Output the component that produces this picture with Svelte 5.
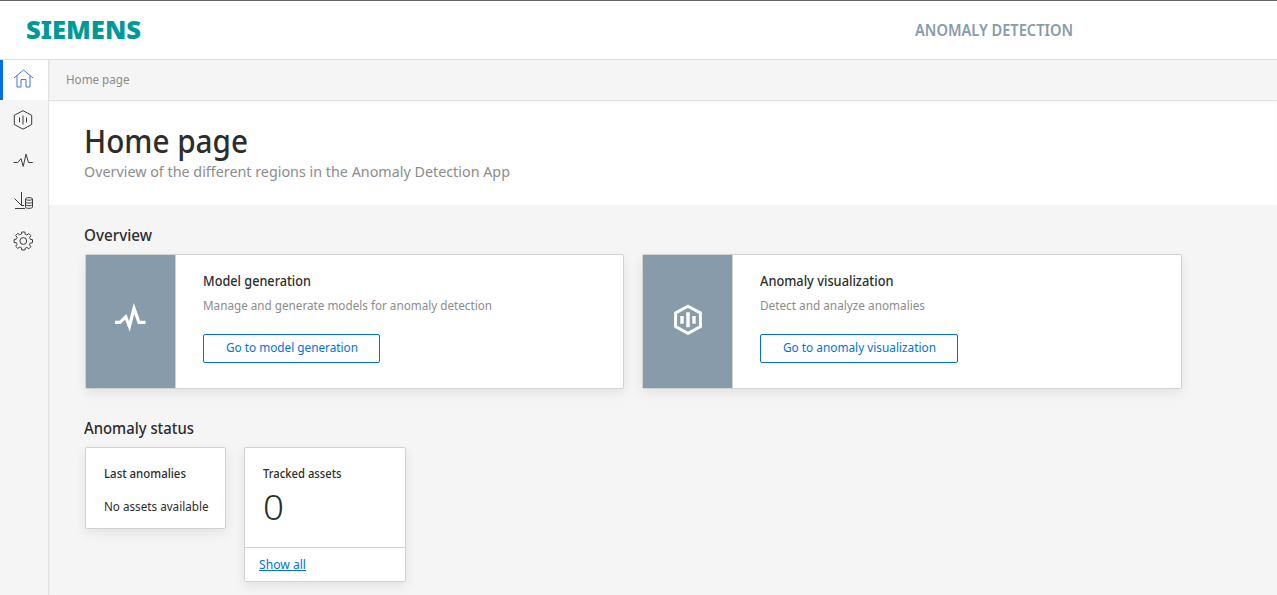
<script>
  // Scales a text run horizontally so that it fills the given width in pixels.
  function fit(node, width) {
    const natural = node.getBoundingClientRect().width;
    node.style.transform = `scaleX(${width / natural})`;
    node.style.marginRight = `${width - natural}px`;
  }
  const cards = [
    { icon: 'pulse', title: 'Model generation', tw: 108, text: 'Manage and generate models for anomaly detection', dw: 289, action: 'Go to model generation', aw: 132, bw: 177, w: 539 },
    { icon: 'hex', title: 'Anomaly visualization', tw: 133.5, text: 'Detect and analyze anomalies', dw: 165, action: 'Go to anomaly visualization', aw: 153, bw: 198, w: 540 }
  ];
</script>

<div class="app">
  <header>
    <div class="logo"><span use:fit={115}>SIEMENS</span></div>
    <div class="product"><span use:fit={158}>ANOMALY DETECTION</span></div>
  </header>
  <div class="body">
    <nav>
      <a class="item active" href="#home" aria-label="Home">
        <svg width="20" height="20" viewBox="0 0 20 20"><path d="M1 9 10.500 1l9.500 8M4 6.500v11.500h4v-7.500h5v7.500h4V6.500" /></svg>
      </a>
      <a class="item" href="#visualization" aria-label="Anomaly visualization">
        <svg width="20" height="20" viewBox="0 0 20 20"><path d="M10 .7 18.7 5.3v9.2L10 19.2 1.3 14.5V5.3z" /><path d="M6.500 7.400v5M10 5.500v9M13.500 7.400v5" /></svg>
      </a>
      <a class="item" href="#models" aria-label="Model generation">
        <svg width="20" height="20" viewBox="0 0 20 20"><path d="M.5 11.500h4.300L8 7.600l2.200 7.800L13 3.200l2.500 8.300h4.300" /></svg>
      </a>
      <a class="item" href="#import" aria-label="Data import">
        <svg width="20" height="20" viewBox="0 0 20 20"><path d="M8.500 1v13.500M1.500 7.500l7 7H11M2 17.500h10" /><path d="M12.500 8c0-1.800 7-1.800 7 0v8c0 1.800-7 1.800-7 0zM12.500 8c0 1.600 7 1.600 7 0M12.500 11c0 1.400 7 1.400 7 0M12.500 13.600c0 1.400 7 1.400 7 0" /></svg>
      </a>
      <a class="item" href="#settings" aria-label="Settings">
        <svg width="20" height="20" viewBox="0 0 20 20"><circle cx="10.300" cy="10" r="3.400" /><path transform="translate(.3)" d="M8.500 1h3l.5 2.400q.8.2 1.500.6l2-1.400 2.100 2.100-1.400 2q.4.7.6 1.500l2.400.5v3l-2.400.5q-.2.8-.6 1.500l1.400 2-2.100 2.100-2-1.400q-.7.4-1.500.6L11.500 19h-3L8 16.600q-.8-.2-1.500-.6l-2 1.400-2.100-2.100 1.400-2q-.4-.7-.6-1.500L.8 11.500v-3L3.200 8q.2-.8.6-1.500l-1.400-2 2.100-2.100 2 1.400q.7-.4 1.500-.6z" /></svg>
      </a>
    </nav>
    <main>
      <div class="crumb"><span use:fit={63.5}>Home page</span></div>
      <section class="hero">
        <h1><span use:fit={164}>Home page</span></h1>
        <p><span use:fit={426}>Overview of the different regions in the Anomaly Detection App</span></p>
      </section>
      <section class="content">
        <h2><span use:fit={68}>Overview</span></h2>
        <div class="cards">
          {#each cards as c}
            <article class="card" style="width: {c.w}px">
              <div class="tile">
                {#if c.icon === 'pulse'}
                  <svg width="32" height="32" viewBox="0 0 32 32"><path d="M0 18.300h5L10.700 12.800l3.700 9.700L19 4.500l5 13.800h6.500" stroke-width="3.200" /></svg>
                {:else}
                  <svg width="32" height="32" viewBox="0 0 32 32"><path d="M16 2.200 28.400 9v13.600L16 29.400 3.600 22.600V9z" stroke-width="3" /><path d="M10 12v7.800M16 8.200v15M22 12v7.800" stroke-width="3.400" /></svg>
                {/if}
              </div>
              <div class="info">
                <h3><span use:fit={c.tw}>{c.title}</span></h3>
                <p><span use:fit={c.dw}>{c.text}</span></p>
                <button style="width: {c.bw}px"><span use:fit={c.aw}>{c.action}</span></button>
              </div>
            </article>
          {/each}
        </div>
        <h2 class="second"><span use:fit={110}>Anomaly status</span></h2>
        <div class="stats">
          <article class="last">
            <h4><span use:fit={82}>Last anomalies</span></h4>
            <p><span use:fit={104.5}>No assets available</span></p>
          </article>
          <article class="tracked">
            <div class="top">
              <h4><span use:fit={78.5}>Tracked assets</span></h4>
              <div class="num"><span use:fit={21}>0</span></div>
            </div>
            <div class="foot"><a href="#all"><span use:fit={47}>Show all</span></a></div>
          </article>
        </div>
      </section>
    </main>
  </div>
</div>

<style>
  :global(body) { margin: 0; overflow: hidden; }
  .app { width: 100%; height: 595px; box-sizing: border-box; border-top: 1px solid #666; background: #f5f5f5; font-family: "Noto Sans", "Open Sans", sans-serif; color: #2d2d2d; overflow: hidden; display: flex; flex-direction: column; }
  span { display: inline-block; white-space: nowrap; transform-origin: 0 50%; }
  h1, h2, h3, h4, p { margin: 0; font-weight: 500; }
  header { flex: none; height: 59px; box-sizing: border-box; background: #fff; border-bottom: 1px solid #e1e1e1; display: flex; justify-content: space-between; align-items: center; padding: 0 204px 0 25.5px; }
  .logo { color: #099; font-size: 24.5px; font-weight: 900; line-height: 58px; }
  .product { color: #879baa; font-size: 16.3px; font-weight: 600; line-height: 58px; }
  .body { flex: 1; min-height: 0; display: flex; }
  nav { flex: none; width: 49px; box-sizing: border-box; border-right: 1px solid #e1e1e1; box-shadow: 1px 0 2px #0000000a; }
  .item { display: flex; box-sizing: border-box; height: 40.4px; align-items: center; padding-left: 13px; }
  .item svg, .tile svg { fill: none; stroke: #3c3c3c; stroke-width: 1; display: block; overflow: visible; }
  .item.active { height: 40px; background: #fff; border-left: 3px solid #006fe6; padding-left: 10px; padding-bottom: 3px; }
  .item.active svg { stroke: #4178dc; }
  main { flex: 1; min-width: 0; }
  .crumb { height: 41px; box-sizing: border-box; border-bottom: 1px solid #e1e1e1; padding-left: 17px; line-height: 39px; font-size: 12.8px; color: #8c8c8c; }
  .hero { height: 104px; box-sizing: border-box; background: #fff; padding: 19px 0 0 35px; box-shadow: inset 0 2px 2px #00000008; }
  h1 { font-size: 33px; line-height: 42px; }
  .hero p { font-size: 14.6px; line-height: 18px; color: #8c8c8c; font-weight: 400; }
  .content { padding: 17px 0 0 36px; }
  h2 { font-size: 15.8px; line-height: 26px; height: 32px; margin-left: -1px; }
  .cards { display: flex; gap: 18px; }
  .card, .last, .tracked { box-sizing: border-box; background: #fff; border: 1px solid #d2d2d2; border-radius: 2px; box-shadow: 0 4px 12px #00000014; }
  .card { height: 135px; display: flex; }
  .tile { width: 89px; height: 130px; background: #879baa; border-right: 1px solid #d2d2d2; display: flex; justify-content: center; align-items: center; padding-bottom: 3px; }
  .tile svg { stroke: #fff; }
  .info { padding: 16px 0 0 27px; }
  h3 { font-size: 13.8px; line-height: 20px; }
  .info p { font-size: 12.8px; line-height: 20px; padding: 4px 0 1px; color: #8c8c8c; font-weight: 400; }
  button { display: block; margin-top: 18px; height: 29px; box-sizing: border-box; border: 1px solid #006fe6; border-radius: 2px; background: #fff; color: #006fe6; font: 12.8px/23px "Noto Sans", sans-serif; padding: 0 0 3px; text-align: center; }
  .second { margin-top: 26px; }
  .stats { display: flex; gap: 18px; align-items: flex-start; }
  .last { width: 141px; height: 82px; padding: 15px 17.5px; }
  h4 { font-size: 12.7px; line-height: 20px; }
  .last p { font-size: 12.7px; line-height: 20px; margin-top: 13px; font-weight: 400; }
  .tracked { width: 162px; height: 135px; }
  .top { height: 99px; box-sizing: border-box; padding: 15px 18px 0; }
  .num { font-size: 34px; font-weight: 350; line-height: 49px; }
  .foot { border-top: 1px solid #d2d2d2; padding-left: 14px; font-size: 12.8px; line-height: 33px; }
  .foot a { color: #006fe6; text-decoration: none; }
  .foot span { text-decoration: underline; }
</style>
